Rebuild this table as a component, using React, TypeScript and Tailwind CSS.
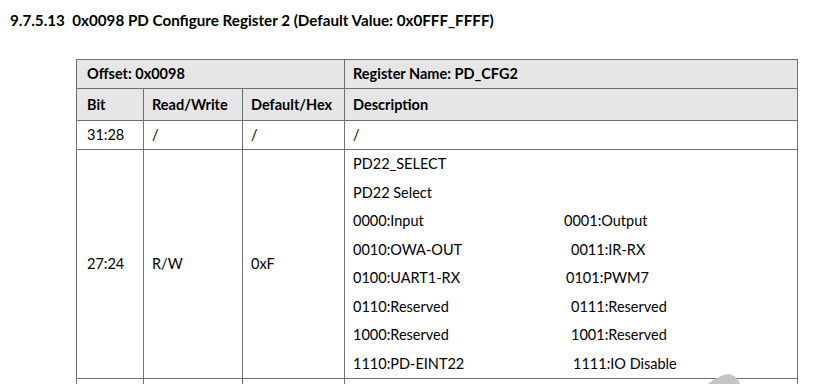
import React from "react";

const font = { fontFamily: "Lato, 'Open Sans', sans-serif" };

const options: [string, string, string][] = [
  ["0000:Input", "0001:Output", "ml-[211px]"],
  ["0010:OWA-OUT", "0011:IR-RX", "ml-[218px]"],
  ["0100:UART1-RX", "0101:PWM7", "ml-[213px]"],
  ["0110:Reserved", "0111:Reserved", "ml-[218px]"],
  ["1000:Reserved", "1001:Reserved", "ml-[218px]"],
  ["1110:PD-EINT22", "1111:IO Disable", "ml-[220px]"],
];

export default function App() {
  const cell = "border border-[#707070] px-2 align-middle";
  return (
    <div
      className="relative w-[813px] h-[384px] overflow-hidden bg-white text-black"
      style={font}
    >
      <h1 className="pl-[10px] pt-[9px] text-[15.2px] font-bold leading-[22px] whitespace-pre">
        {"9.7.5.13  0x0098 PD Configure Register 2 (Default Value: 0x0FFF_FFFF)"}
      </h1>
      <table className="ml-[76px] mt-[28px] border-collapse text-[14.5px] leading-[20px] table-fixed w-[721px]">
        <colgroup>
          <col className="w-[67px]" />
          <col className="w-[99px]" />
          <col className="w-[102px]" />
          <col className="w-[453px]" />
        </colgroup>
        <tbody>
          <tr className="h-[29px] bg-[#e6e6e6] font-bold">
            <td colSpan={3} className={`${cell} pl-[10px]`}>
              Offset: 0x0098
            </td>
            <td className={cell}>Register Name: PD_CFG2</td>
          </tr>
          <tr className="h-[32px] bg-[#e6e6e6] font-bold">
            <td className={`${cell} pl-[10px]`}>Bit</td>
            <td className={cell}>Read/Write</td>
            <td className={cell}>Default/Hex</td>
            <td className={cell}>Description</td>
          </tr>
          <tr className="h-[29px]">
            <td className={`${cell} pl-[10px]`}>31:28</td>
            <td className={cell}>/</td>
            <td className={cell}>/</td>
            <td className={cell}>/</td>
          </tr>
          <tr className="h-[229px]">
            <td className={`${cell} pl-[10px]`}>27:24</td>
            <td className={cell}>R/W</td>
            <td className={cell}>0xF</td>
            <td className={`${cell} py-0`}>
              <div className="flex flex-col leading-[28.5px]">
                <div>PD22_SELECT</div>
                <div>PD22 Select</div>
                {options.map(([a, b, offset]) => (
                  <div key={a} className="flex">
                    <span className="w-0 whitespace-nowrap">{a}</span>
                    <span className={`${offset} whitespace-nowrap`}>{b}</span>
                  </div>
                ))}
              </div>
            </td>
          </tr>
          <tr className="h-[29px]">
            <td className={cell}></td>
            <td className={cell}></td>
            <td className={cell}></td>
            <td className={cell}></td>
          </tr>
        </tbody>
      </table>
      <svg
        className="absolute left-[700px] top-[370px]"
        width="50"
        height="20"
        viewBox="0 0 50 20"
      >
        <path d="M5 16 Q18 6 27 4 Q36 4 40 14 L42 20 L3 20 Z" fill="#c4c4c4" />
      </svg>
    </div>
  );
}
